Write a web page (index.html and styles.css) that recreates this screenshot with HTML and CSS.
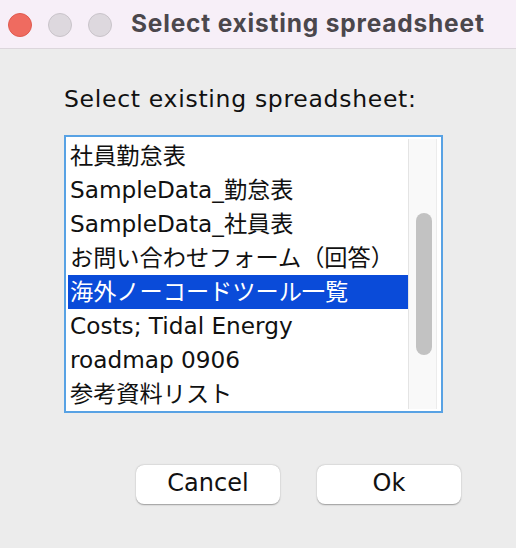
FILE: index.html
```html
<!DOCTYPE html>
<html>
<head>
<meta charset="utf-8">
<link rel="stylesheet" href="styles.css">
</head>
<body>
<div class="window">
  <div class="titlebar">
    <div class="lights">
      <span class="light red"></span>
      <span class="light gray"></span>
      <span class="light gray"></span>
    </div>
    <div class="title">Select existing spreadsheet</div>
  </div>
  <div class="content">
    <div class="label">Select existing spreadsheet:</div>
    <div class="listbox">
      <ul class="items">
        <li>社員勤怠表</li>
        <li>SampleData_勤怠表</li>
        <li>SampleData_社員表</li>
        <li>お問い合わせフォーム（回答）</li>
        <li class="selected">海外ノーコードツール一覧</li>
        <li>Costs; Tidal Energy</li>
        <li>roadmap 0906</li>
        <li>参考資料リスト</li>
      </ul>
      <div class="scrollbar"><div class="thumb"></div></div>
    </div>
    <div class="buttons">
      <button class="btn">Cancel</button>
      <button class="btn">Ok</button>
    </div>
  </div>
</div>
</body>
</html>
```

FILE: styles.css
```css
html, body {
  margin: 0;
  padding: 0;
  background: #ececec;
}
.window {
  width: 516px;
  height: 548px;
  background: #ececec;
  font-family: "DejaVu Sans", "Noto Sans CJK JP", sans-serif;
}
.titlebar {
  height: 48px;
  background: #f7eff8;
  border-bottom: 1px solid #dcd6dc;
  display: flex;
  align-items: center;
  padding-left: 8px;
  box-sizing: content-box;
}
.lights {
  display: flex;
  gap: 16px;
  margin-top: 2px;
}
.light {
  width: 24px;
  height: 24px;
  border-radius: 50%;
  box-sizing: border-box;
}
.light.red {
  background: #ef6b60;
  border: 1px solid #e05a4f;
}
.light.gray {
  background: #ddd8de;
  border: 1px solid #c9c4ca;
}
.title {
  margin-left: 19px;
  margin-top: -2px;
  font-family: "Inter", "Liberation Sans", sans-serif;
  font-weight: 700;
  font-size: 24.5px;
  color: #4b474c;
  letter-spacing: 0.8px;
}
.content {
  padding: 35px 0 0 64px;
}
.label {
  font-size: 23.5px;
  line-height: 30px;
  letter-spacing: 0.7px;
  color: #111;
  margin-bottom: 21px;
}
.listbox {
  width: 379px;
  height: 278px;
  box-sizing: border-box;
  border: 2px solid #58a2e4;
  background: #fff;
  padding: 2px 4px 2px 2px;
  display: flex;
}
.items {
  list-style: none;
  margin: 0;
  padding: 0;
  width: 340px;
}
.items li {
  height: 34px;
  line-height: 34px;
  padding-left: 2px;
  font-size: 23.2px;
  color: #111;
  white-space: nowrap;
  overflow: hidden;
}
.items li.selected {
  background: #0a4bd9;
  color: #fff;
}
.scrollbar {
  width: 29px;
  background: #f9f9f9;
  border-left: 1px solid #e4e4e4;
  border-right: 1px solid #ececec;
  box-sizing: border-box;
  padding: 74px 0 0 7px;
}
.thumb {
  width: 16px;
  height: 142px;
  border-radius: 8px;
  background: #c2c2c2;
}
.buttons {
  display: flex;
  gap: 37px;
  margin-top: 52px;
  padding-left: 72px;
}
.btn {
  width: 144px;
  height: 39px;
  background: #fff;
  border: none;
  border-radius: 8px;
  box-shadow: 0 0.5px 1.5px rgba(0,0,0,0.35);
  font-family: "DejaVu Sans", sans-serif;
  font-size: 24px;
  line-height: 36px;
  color: #111;
  padding: 0 0 3px 0;
}
```
